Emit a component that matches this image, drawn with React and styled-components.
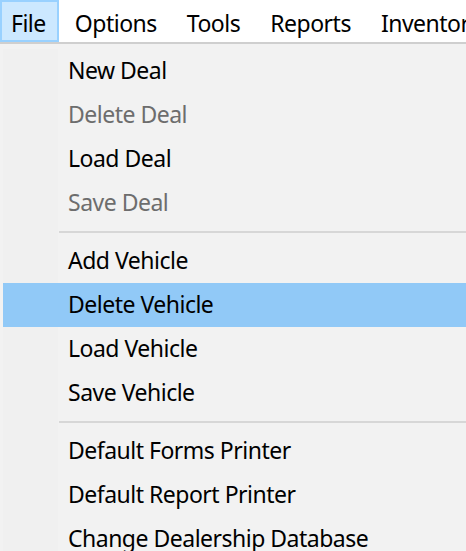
import React from "react";
import styled, { createGlobalStyle } from "styled-components";

const GlobalStyle = createGlobalStyle`
  html, body {
    margin: 0;
    padding: 0;
    background: #ffffff;
    overflow: hidden;
  }
  body {
    font-family: "Noto Sans", "Open Sans", sans-serif;
  }
`;

const Page = styled.div`
  width: 466px;
  height: 551px;
  overflow: hidden;
`;

const MenuBar = styled.div`
  display: flex;
  height: 42px;
  background: #ffffff;
  white-space: nowrap;
`;

const BarItem = styled.div`
  display: flex;
  align-items: center;
  box-sizing: border-box;
  height: 42px;
  padding: 3px ${(p) => (p.$open ? "11px 0 9px" : "14px 0 16px")};
  font-size: 23px;
  letter-spacing: -0.5px;
  color: #000;
  background: ${(p) => (p.$open ? "#cce8ff" : "transparent")};
  border: ${(p) => (p.$open ? "2px solid #99d1ff" : "none")};
`;

const Dropdown = styled.div`
  border-top: 2px solid #cfcfcf;
  background: #f2f2f2;
  padding: 5px 0 0 3px;
  display: flex;
  flex-direction: column;
`;

const Item = styled.div`
  display: flex;
  align-items: center;
  height: 44px;
  font-size: 23px;
  letter-spacing: -0.5px;
  color: ${(p) => (p.$disabled ? "#6d6d6d" : "#000")};
  background: ${(p) =>
    p.$active
      ? "#91c9f7"
      : "linear-gradient(to right, #f0f0f0 0 55px, #f2f2f2 55px)"};
  white-space: nowrap;
`;

const Label = styled.span`
  padding-left: 65px;
  padding-bottom: 2px;
`;

const Separator = styled.div`
  display: flex;
  align-items: center;
  height: 14px;
  background: linear-gradient(to right, #f0f0f0 0 55px, #f2f2f2 55px);

  &::after {
    content: "";
    height: 2px;
    flex: 1;
    margin-left: 56px;
    background: #d7d7d7;
  }
`;

const groups = [
  [
    { label: "New Deal" },
    { label: "Delete Deal", disabled: true },
    { label: "Load Deal" },
    { label: "Save Deal", disabled: true },
  ],
  [
    { label: "Add Vehicle" },
    { label: "Delete Vehicle", active: true },
    { label: "Load Vehicle" },
    { label: "Save Vehicle" },
  ],
  [
    { label: "Default Forms Printer" },
    { label: "Default Report Printer" },
    { label: "Change Dealership Database" },
  ],
];

export default function App() {
  return (
    <Page>
      <GlobalStyle />
      <MenuBar>
        <BarItem $open>File</BarItem>
        <BarItem>Options</BarItem>
        <BarItem>Tools</BarItem>
        <BarItem>Reports</BarItem>
        <BarItem>Inventory</BarItem>
      </MenuBar>
      <Dropdown>
        {groups.map((group, gi) => (
          <React.Fragment key={gi}>
            {gi > 0 && <Separator />}
            {group.map((item) => (
              <Item
                key={item.label}
                $disabled={item.disabled}
                $active={item.active}
              >
                <Label>{item.label}</Label>
              </Item>
            ))}
          </React.Fragment>
        ))}
      </Dropdown>
    </Page>
  );
}
